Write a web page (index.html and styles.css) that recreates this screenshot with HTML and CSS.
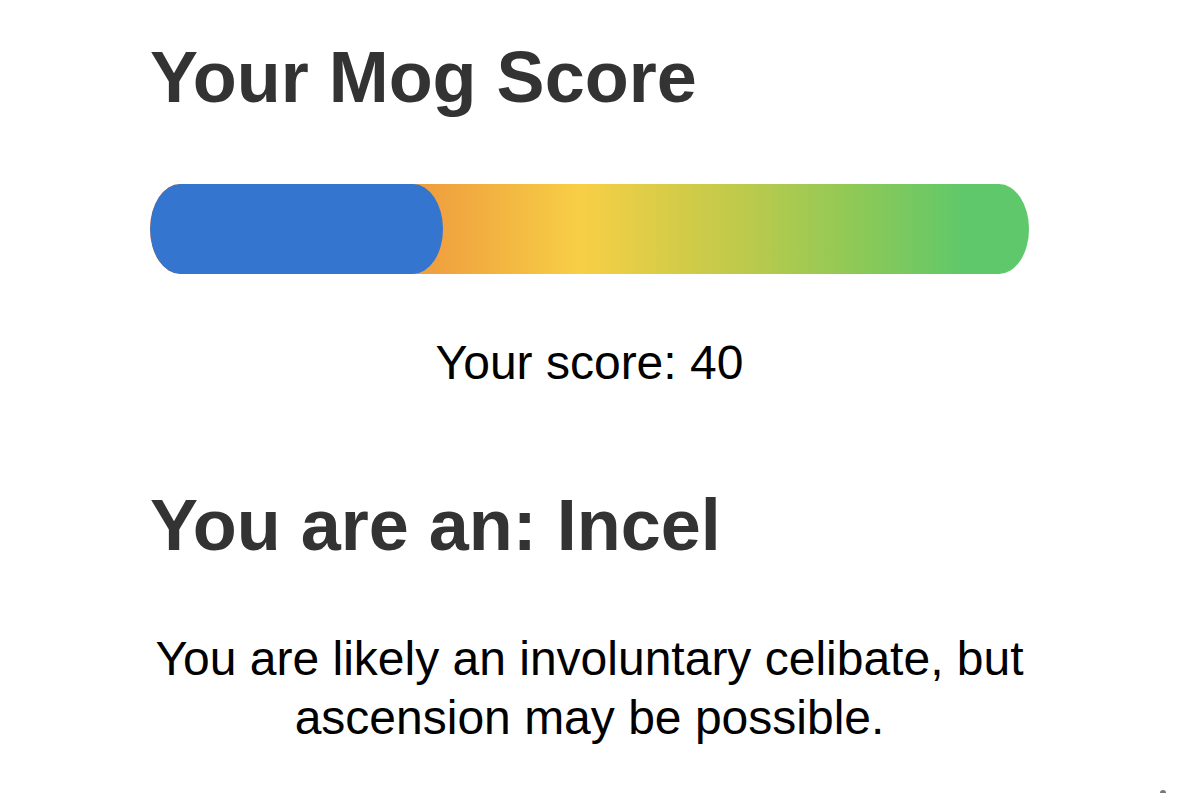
FILE: index.html
```html
<!DOCTYPE html>
<html lang="en">
<head>
    <meta charset="UTF-8">
    <meta name="viewport" content="width=device-width, initial-scale=1.0">
    <title>Mog Score</title>
    <link rel="stylesheet" href="styles.css">
</head>
<body>
    <div class="result">
        <h1 class="title">Your Mog Score</h1>
        <div class="meter">
            <div class="meterFill" style="width: 33.3%"></div>
        </div>
        <p class="score">Your score: 40</p>
        <h2 class="title verdict">You are an: Incel</h2>
        <p class="description">You are likely an involuntary celibate, but ascension may be possible.</p>
    </div>
    <div class="scrollDot"></div>
</body>
</html>
```

FILE: styles.css
```css
body {
    margin: 0;
    background-color: white;
    font-family: "Liberation Sans", Arial, sans-serif;
    color: black;
}
.result {
    display: flex;
    flex-direction: column;
    padding: 34px 150px 0 150px;
}
.title {
    margin: 0;
    color: #333333;
    font-size: 72px;
    font-weight: bold;
    line-height: 1.2;
}
.meter {
    height: 90px;
    margin-top: 63.6px;
    border-radius: 30px / 45px;
    background: linear-gradient(to right, #e8743b 0%, #f0a23f 33%, #f7cf45 49%, #c2ca4a 66%, #8fc956 80%, #5ec86b 93%, #5ec86b 100%);
    overflow: hidden;
}
.meterFill {
    height: 100%;
    border-radius: 30px / 45px;
    background-color: #3476cf;
}
.score {
    margin: 59.6px 0 0 0;
    font-size: 48px;
    line-height: 1.2;
    text-align: center;
}
.verdict {
    margin-top: 90.6px;
}
.description {
    margin: 60.7px 0 0 0;
    font-size: 48px;
    line-height: 59px;
    text-align: center;
}
.scrollDot {
    position: fixed;
    right: 13px;
    bottom: -3px;
    width: 6px;
    height: 6px;
    border-radius: 50%;
    background-color: #777777;
}
```
